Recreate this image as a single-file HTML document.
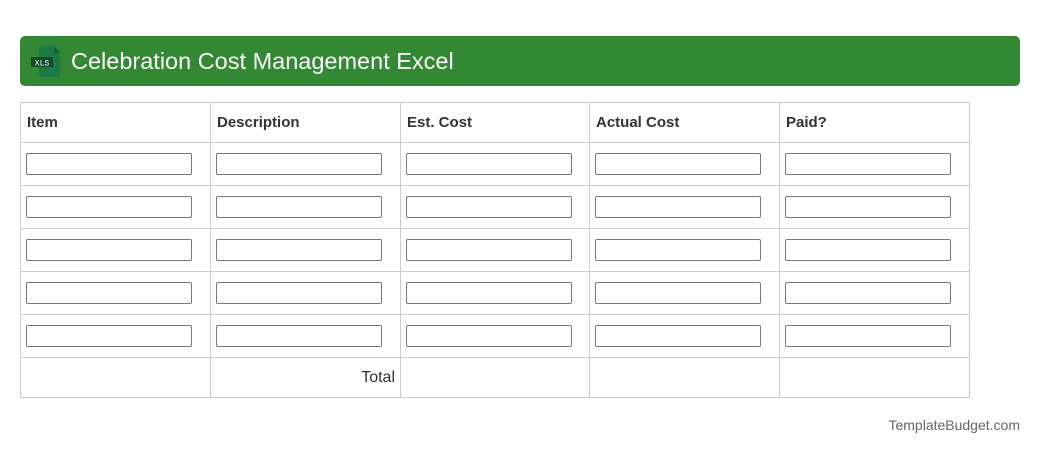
<!DOCTYPE html>
<html><head><style>
body{margin:0;width:1040px;height:455px;background:#fff;font-family:"Liberation Sans",Arial,sans-serif;position:relative;overflow:hidden}
.hdr{position:absolute;left:20px;top:36px;width:1000px;height:50px;background:#338833;border-radius:5px}
.hdr .t{position:absolute;left:51px;top:12px;color:#fff;font-size:23.5px}
table{position:absolute;left:20px;top:102px;border-collapse:collapse;table-layout:fixed}
td{border:1px solid #ccc;padding:0;box-sizing:border-box}
tr.h td{height:40px;font-weight:bold;color:#333;font-size:15px;padding-left:6px}
tr.r td{height:43px;position:relative}
.in{position:absolute;left:5px;top:10px;width:166px;height:22px;box-sizing:border-box;border:1px solid #777;border-radius:2px}
tr.f td{height:40px;font-size:16px;color:#333}
.foot{position:absolute;right:20px;top:417px;font-size:14px;color:#666}
</style></head><body>
<div class="hdr">
<svg style="position:absolute;left:10px;top:9px" width="32" height="33" viewBox="0 0 32 33">
<path d="M9 1h15l6 7v24H9z" fill="#1e7a45"/><path d="M24 1v7h6z" fill="#145c33"/>
<rect x="1" y="12" width="22" height="10" fill="#0e4d2a"/>
<text x="12" y="20.5" font-size="8" fill="#fff" text-anchor="middle" font-family="Liberation Mono,monospace">XLS</text>
</svg>
<div class="t">Celebration Cost Management Excel</div>
</div>
<table>
<colgroup><col style="width:190px"><col style="width:190px"><col style="width:189px"><col style="width:190px"><col style="width:190px"></colgroup>
<tr class="h"><td>Item</td><td>Description</td><td>Est. Cost</td><td>Actual Cost</td><td>Paid?</td></tr>
<tr class="r"><td><div class="in"></div></td><td><div class="in"></div></td><td><div class="in"></div></td><td><div class="in"></div></td><td><div class="in"></div></td></tr>
<tr class="r"><td><div class="in"></div></td><td><div class="in"></div></td><td><div class="in"></div></td><td><div class="in"></div></td><td><div class="in"></div></td></tr>
<tr class="r"><td><div class="in"></div></td><td><div class="in"></div></td><td><div class="in"></div></td><td><div class="in"></div></td><td><div class="in"></div></td></tr>
<tr class="r"><td><div class="in"></div></td><td><div class="in"></div></td><td><div class="in"></div></td><td><div class="in"></div></td><td><div class="in"></div></td></tr>
<tr class="r"><td><div class="in"></div></td><td><div class="in"></div></td><td><div class="in"></div></td><td><div class="in"></div></td><td><div class="in"></div></td></tr>
<tr class="f"><td></td><td style="text-align:right;padding-right:5px">Total</td><td></td><td></td><td></td></tr>
</table>
<div class="foot">TemplateBudget.com</div>
</body></html>
